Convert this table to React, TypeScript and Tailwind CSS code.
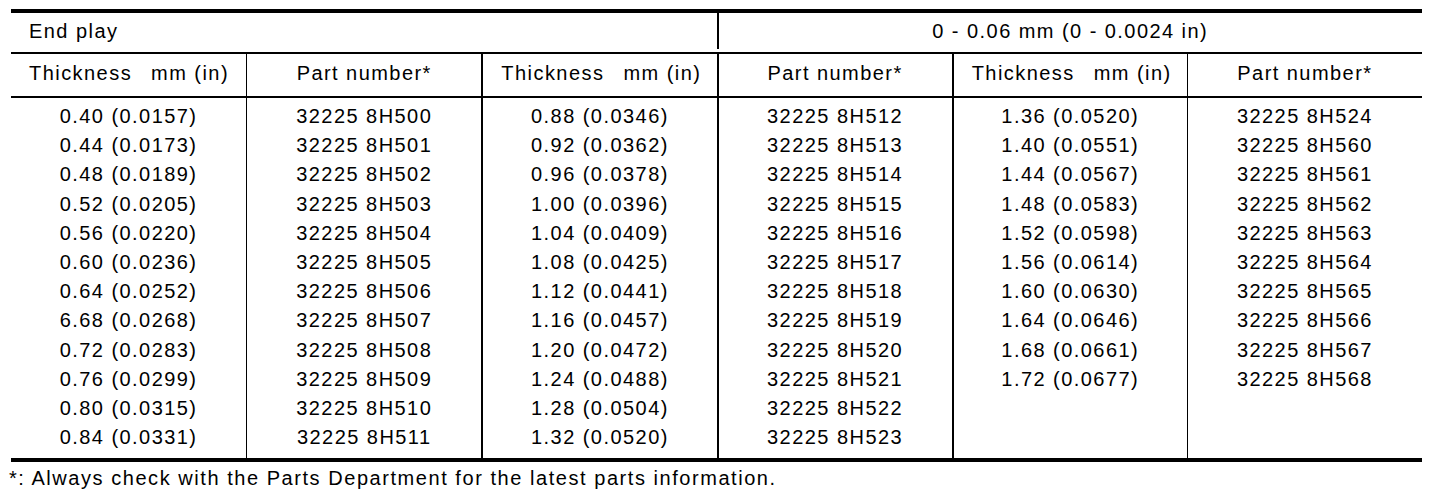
import React from "react";

const thickness1 = [
  "0.40 (0.0157)",
  "0.44 (0.0173)",
  "0.48 (0.0189)",
  "0.52 (0.0205)",
  "0.56 (0.0220)",
  "0.60 (0.0236)",
  "0.64 (0.0252)",
  "6.68 (0.0268)",
  "0.72 (0.0283)",
  "0.76 (0.0299)",
  "0.80 (0.0315)",
  "0.84 (0.0331)",
];
const parts1 = Array.from({ length: 12 }, (_, i) => `32225 8H5${String(i).padStart(2, "0")}`);

const thickness2 = [
  "0.88 (0.0346)",
  "0.92 (0.0362)",
  "0.96 (0.0378)",
  "1.00 (0.0396)",
  "1.04 (0.0409)",
  "1.08 (0.0425)",
  "1.12 (0.0441)",
  "1.16 (0.0457)",
  "1.20 (0.0472)",
  "1.24 (0.0488)",
  "1.28 (0.0504)",
  "1.32 (0.0520)",
];
const parts2 = Array.from({ length: 12 }, (_, i) => `32225 8H5${i + 12}`);

const thickness3 = [
  "1.36 (0.0520)",
  "1.40 (0.0551)",
  "1.44 (0.0567)",
  "1.48 (0.0583)",
  "1.52 (0.0598)",
  "1.56 (0.0614)",
  "1.60 (0.0630)",
  "1.64 (0.0646)",
  "1.68 (0.0661)",
  "1.72 (0.0677)",
];
const parts3 = ["32225 8H524", ...Array.from({ length: 9 }, (_, i) => `32225 8H56${i}`)];

const columns = [
  { lines: thickness1, border: "" },
  { lines: parts1, border: "border-l border-black" },
  { lines: thickness2, border: "border-l-2 border-black" },
  { lines: parts2, border: "border-l-2 border-black" },
  { lines: thickness3, border: "border-l-2 border-black" },
  { lines: parts3, border: "border-l border-black" },
];

export default function App() {
  return (
    <div
      className="bg-white w-[1456px] h-[498px] pt-[9px] pl-[11px] text-black text-[20px] tracking-[1.45px]"
      style={{ fontFamily: '"Liberation Sans", Arial, sans-serif' }}
    >
      <div className="w-[1411px] border-t-4 border-b-4 border-black">
        {/* End play row */}
        <div className="grid grid-cols-2 h-[41px] pb-[3px] border-b-2 border-black">
          <div className="flex items-center pl-[18px]">End play</div>
          <div className="flex items-center justify-center border-l-2 border-black">
            0 - 0.06 mm (0 - 0.0024 in)
          </div>
        </div>

        {/* Column headers */}
        <div className="grid grid-cols-6 h-[44px] border-b-2 border-black">
          {columns.map((c, i) =>
            i % 2 === 0 ? (
              <div key={i} className={`flex items-center pb-[4px] pl-[18px] ${c.border}`}>
                <span>Thickness</span>
                <span className="ml-[19px]">mm (in)</span>
              </div>
            ) : (
              <div key={i} className={`flex items-center justify-center pb-[4px] ${c.border}`}>
                Part number*
              </div>
            )
          )}
        </div>

        {/* Data */}
        <div className="grid grid-cols-6">
          {columns.map((c, i) => (
            <div key={i} className={`pt-[4px] pb-[6px] text-center ${c.border}`}>
              {c.lines.map((l) => (
                <div key={l} className="h-[29.2px] leading-[29.2px]">
                  {l}
                </div>
              ))}
            </div>
          ))}
        </div>
      </div>

      <div className="mt-[5px] -ml-[2px] leading-[23px] tracking-[1.55px]">
        *: Always check with the Parts Department for the latest parts information.
      </div>
    </div>
  );
}
